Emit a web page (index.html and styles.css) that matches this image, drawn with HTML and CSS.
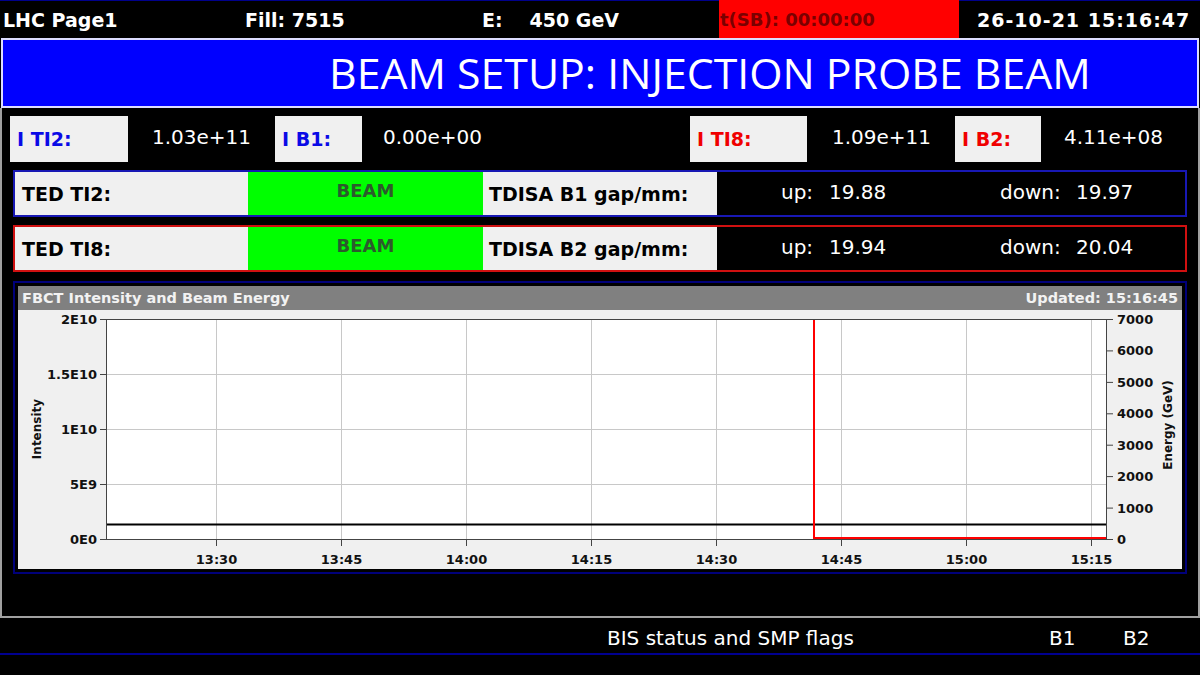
FILE: index.html
```html
<!DOCTYPE html>
<html>
<head>
<meta charset="utf-8">
<title>LHC Page1</title>
<link rel="stylesheet" href="styles.css">
</head>
<body>
<div class="screen">
  <header class="topbar">
    <div class="cell c1">LHC Page1</div>
    <div class="cell c2">Fill: 7515</div>
    <div class="cell c3"><span>E:</span><span class="ev">450 GeV</span></div>
    <div class="cell c4">t(SB): 00:00:00</div>
    <div class="cell c5">26-10-21 15:16:47</div>
  </header>

  <div class="title">BEAM SETUP: INJECTION PROBE BEAM</div>

  <main class="main">
    <div class="intens">
      <div class="lbl blue w1">I TI2:</div><div class="val v1">1.03e+11</div>
      <div class="lbl blue w2">I B1:</div><div class="val v2">0.00e+00</div>
      <div class="lbl red w3">I TI8:</div><div class="val v3">1.09e+11</div>
      <div class="lbl red w4">I B2:</div><div class="val v4">4.11e+08</div>
    </div>

    <div class="ted b1">
      <div class="tlbl">TED TI2:</div>
      <div class="state">BEAM</div>
      <div class="tlbl gap">TDISA B1 gap/mm:</div>
      <div class="gaps">
        <div class="grp g1"><span class="k1">up:</span><span>19.88</span></div>
        <div class="grp"><span class="k2">down:</span><span>19.97</span></div>
      </div>
    </div>

    <div class="ted b2">
      <div class="tlbl">TED TI8:</div>
      <div class="state">BEAM</div>
      <div class="tlbl gap">TDISA B2 gap/mm:</div>
      <div class="gaps">
        <div class="grp g1"><span class="k1">up:</span><span>19.94</span></div>
        <div class="grp"><span class="k2">down:</span><span>20.04</span></div>
      </div>
    </div>

    <section class="chart">
      <div class="chart-head"><span>FBCT Intensity and Beam Energy</span><span>Updated: 15:16:45</span></div>
      <div class="chart-body">
        <svg class="plot" width="1164" height="259" viewBox="0 0 1164 259" xmlns="http://www.w3.org/2000/svg">
          <rect x="88" y="9" width="1001" height="221" fill="#ffffff"/>
          <g stroke="#c8c8c8" stroke-width="1">
            <line x1="198.5" y1="10" x2="198.5" y2="229"/>
            <line x1="323.5" y1="10" x2="323.5" y2="229"/>
            <line x1="448.5" y1="10" x2="448.5" y2="229"/>
            <line x1="573.5" y1="10" x2="573.5" y2="229"/>
            <line x1="698.5" y1="10" x2="698.5" y2="229"/>
            <line x1="823.5" y1="10" x2="823.5" y2="229"/>
            <line x1="948.5" y1="10" x2="948.5" y2="229"/>
            <line x1="1073.5" y1="10" x2="1073.5" y2="229"/>
            <line x1="89" y1="64.5" x2="1088" y2="64.5"/>
            <line x1="89" y1="119.5" x2="1088" y2="119.5"/>
            <line x1="89" y1="174.5" x2="1088" y2="174.5"/>
          </g>
          <g stroke="#444444" stroke-width="1" fill="none">
            <rect x="88.5" y="9.5" width="1000" height="220"/>
            <line x1="82" y1="9.5" x2="88" y2="9.5"/>
            <line x1="82" y1="64.5" x2="88" y2="64.5"/>
            <line x1="82" y1="119.5" x2="88" y2="119.5"/>
            <line x1="82" y1="174.5" x2="88" y2="174.5"/>
            <line x1="82" y1="229.5" x2="88" y2="229.5"/>
            <line x1="1089" y1="9.5" x2="1095" y2="9.5"/>
            <line x1="1089" y1="40.9" x2="1095" y2="40.9"/>
            <line x1="1089" y1="72.4" x2="1095" y2="72.4"/>
            <line x1="1089" y1="103.8" x2="1095" y2="103.8"/>
            <line x1="1089" y1="135.2" x2="1095" y2="135.2"/>
            <line x1="1089" y1="166.6" x2="1095" y2="166.6"/>
            <line x1="1089" y1="198.1" x2="1095" y2="198.1"/>
            <line x1="1089" y1="229.5" x2="1095" y2="229.5"/>
            <line x1="198.5" y1="230" x2="198.5" y2="236"/>
            <line x1="323.5" y1="230" x2="323.5" y2="236"/>
            <line x1="448.5" y1="230" x2="448.5" y2="236"/>
            <line x1="573.5" y1="230" x2="573.5" y2="236"/>
            <line x1="698.5" y1="230" x2="698.5" y2="236"/>
            <line x1="823.5" y1="230" x2="823.5" y2="236"/>
            <line x1="948.5" y1="230" x2="948.5" y2="236"/>
            <line x1="1073.5" y1="230" x2="1073.5" y2="236"/>
          </g>
          <line x1="89" y1="214.5" x2="1088" y2="214.5" stroke="#000000" stroke-width="2"/>
          <path d="M796 10 V228 H1088" stroke="#ff0000" stroke-width="2" fill="none"/>
          <g class="ax" text-anchor="end">
            <text x="79" y="14">2E10</text>
            <text x="79" y="69">1.5E10</text>
            <text x="79" y="124">1E10</text>
            <text x="79" y="179">5E9</text>
            <text x="79" y="234">0E0</text>
          </g>
          <g class="ax" text-anchor="start">
            <text x="1099" y="14">7000</text>
            <text x="1099" y="45.4">6000</text>
            <text x="1099" y="76.9">5000</text>
            <text x="1099" y="108.3">4000</text>
            <text x="1099" y="139.7">3000</text>
            <text x="1099" y="171.1">2000</text>
            <text x="1099" y="202.6">1000</text>
            <text x="1099" y="234">0</text>
          </g>
          <g class="ax" text-anchor="middle">
            <text x="198.5" y="254">13:30</text>
            <text x="323.5" y="254">13:45</text>
            <text x="448.5" y="254">14:00</text>
            <text x="573.5" y="254">14:15</text>
            <text x="698.5" y="254">14:30</text>
            <text x="823.5" y="254">14:45</text>
            <text x="948.5" y="254">15:00</text>
            <text x="1073.5" y="254">15:15</text>
          </g>
          <text class="axt" text-anchor="middle" transform="translate(22.5,119) rotate(-90)">Intensity</text>
          <text class="axt" text-anchor="middle" transform="translate(1153.5,115) rotate(-90)">Energy (GeV)</text>
        </svg>
      </div>
    </section>
  </main>

  <footer class="bis">
    <span class="bis-t">BIS status and SMP flags</span>
    <span class="bis-b">B1</span>
    <span>B2</span>
  </footer>
</div>
</body>
</html>
```

FILE: styles.css
```css
html, body {
  margin: 0;
  padding: 0;
  background: #000000;
}

.screen {
  width: 1200px;
  height: 675px;
  overflow: hidden;
  background: #000000;
  font-family: "DejaVu Sans", sans-serif;
  color: #ffffff;
}

/* top status bar */
.topbar {
  display: flex;
  height: 38px;
  box-sizing: border-box;
  border-top: 1px solid #00008b;
  font-weight: bold;
  font-size: 19px;
}

.cell {
  display: flex;
  align-items: center;
  box-sizing: border-box;
  white-space: nowrap;
}

.c1 { width: 240px; padding-left: 3px; }
.c2 { width: 238px; padding-left: 5px; }
.c3 { width: 241px; padding-left: 4px; }
.c3 .ev { margin-left: 27px; }
.c4 {
  width: 240px;
  background: #ff0000;
  color: #7a0000;
  font-size: 18px;
  margin-top: -1px;
  padding-left: 1px;
}
.c5 {
  flex: 1;
  padding-left: 18px;
  letter-spacing: 1px;
}

/* title */
.title {
  margin: 0 1px;
  height: 70px;
  box-sizing: border-box;
  border: 2px solid #dcdcff;
  background: #0000ff;
  display: flex;
  align-items: center;
  padding-left: 326px;
  font-family: "Open Sans", "DejaVu Sans", sans-serif;
  font-size: 42.8px;
  line-height: 1;
  white-space: nowrap;
}

/* main panel */
.main {
  height: 510px;
  box-sizing: border-box;
  border: 2px solid #a0a0a0;
  border-top: none;
  padding-top: 8px;
}

.intens {
  display: flex;
  height: 46px;
  margin-left: 8px;
}

.lbl {
  display: flex;
  align-items: center;
  box-sizing: border-box;
  padding-left: 7px;
  background: #f0f0f0;
  font-weight: bold;
  font-size: 19px;
}
.blue { color: #0a0ae6; }
.red { color: #f00000; }

.w1 { width: 118px; }
.w2 { width: 87px; }
.w3 { width: 117px; }
.w4 { width: 86px; }

.val {
  display: flex;
  align-items: center;
  box-sizing: border-box;
  font-size: 20px;
  padding-bottom: 4px;
  white-space: nowrap;
}
.v1 { width: 147px; padding-left: 24px; }
.v2 { width: 328px; padding-left: 21px; }
.v3 { width: 148px; padding-left: 25px; }
.v4 { flex: 1; padding-left: 23px; }

/* TED rows */
.ted {
  display: grid;
  grid-template-columns: 233px 235px 234px 1fr;
  height: 47px;
  box-sizing: border-box;
  margin: 8px 11px 0 11px;
  border: 2px solid #1818b4;
}
.ted.b2 {
  border-color: #d01010;
}

.tlbl {
  display: flex;
  align-items: center;
  padding-left: 7px;
  background: #f0f0f0;
  color: #000000;
  font-weight: bold;
  font-size: 19px;
  white-space: nowrap;
}
.tlbl.gap { padding-left: 6px; }

.state {
  display: flex;
  align-items: center;
  justify-content: center;
  background: #00ff00;
  color: #2c5a2c;
  font-weight: bold;
  font-size: 18px;
  padding-bottom: 6px;
}

.gaps {
  display: flex;
  align-items: center;
  padding-left: 64px;
  padding-bottom: 4px;
  font-size: 20px;
  white-space: nowrap;
}
.grp { display: flex; }
.g1 { width: 219px; }
.k1 { width: 48px; }
.k2 { width: 76px; }

/* chart */
.chart {
  margin: 9px 11px 0 11px;
  border: 2px solid #00007a;
  padding: 3px;
  background: #000000;
}

.chart-head {
  height: 24px;
  display: flex;
  align-items: center;
  justify-content: space-between;
  padding: 0 4px;
  background: #808080;
  color: #f2f2f2;
  font-weight: bold;
  font-size: 14.5px;
}

.chart-body {
  height: 259px;
  background: #f0f0f0;
}

.plot {
  display: block;
}

.ax {
  font-family: "DejaVu Sans", sans-serif;
  font-weight: bold;
  font-size: 13px;
  fill: #111111;
}

.axt {
  font-family: "DejaVu Sans", sans-serif;
  font-weight: bold;
  font-size: 12px;
  fill: #111111;
}

/* bottom bar */
.bis {
  display: flex;
  align-items: center;
  height: 37px;
  box-sizing: border-box;
  padding: 4px 0 0 607px;
  border-bottom: 2px solid #000090;
  font-size: 20px;
  white-space: nowrap;
}
.bis-t { width: 442px; }
.bis-b { width: 74px; }
```
